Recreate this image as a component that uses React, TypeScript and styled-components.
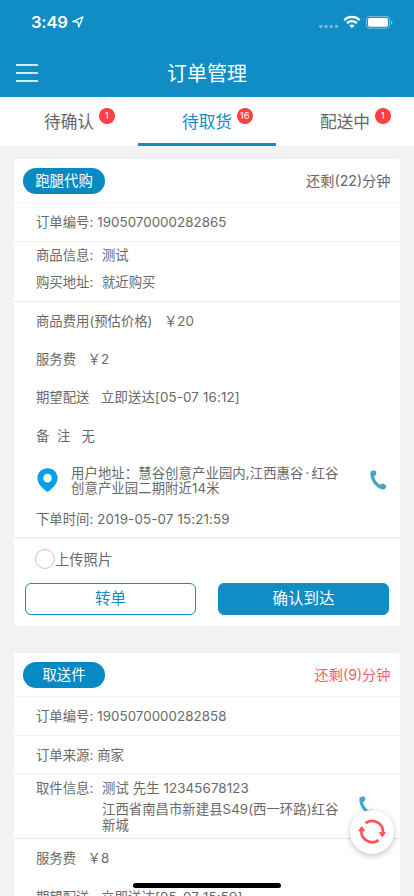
import React from 'react';
import styled, { createGlobalStyle } from 'styled-components';

const BLUE = '#0f8dc4';

const GlobalStyle = createGlobalStyle`
  * { box-sizing: border-box; }
  html, body { margin: 0; padding: 0; height: 896px; overflow: hidden; }
  body {
    background: #f2f2f2;
    color: #696969;
    font-family: Inter, "Noto Sans CJK SC", sans-serif;
    font-size: 13.35px;
  }
`;

const Screen = styled.div`
  position: relative;
  width: 414px;
  height: 896px;
  overflow: hidden;
  background: #f2f2f2;
`;

const Header = styled.header`
  height: 97px;
  background: ${BLUE};
  color: #fff;
`;

const StatusBar = styled.div`
  height: 48px;
  padding: 0 21px 4px 31px;
  display: flex;
  align-items: center;
`;

const Clock = styled.span`
  width: 40px;
  font-size: 16.6px;
  font-weight: 600;
  letter-spacing: -0.2px;
  white-space: nowrap;
`;

const StatusIcons = styled.div`
  margin-left: auto;
  display: flex;
  align-items: center;
`;

const TitleBar = styled.div`
  height: 49px;
  padding: 1px 16px 0;
  display: grid;
  grid-template-columns: 60px 1fr 60px;
  align-items: center;
`;

const MenuButton = styled.button`
  width: 22px;
  height: 18px;
  padding: 0;
  border: 0;
  background: none;
  display: flex;
  flex-direction: column;
  justify-content: space-between;
`;

const MenuLine = styled.span`
  width: 22px;
  height: 2px;
  background: #cfe8f3;
`;

const Title = styled.h1`
  margin: 0;
  padding-top: 2px;
  font-size: 20px;
  font-weight: 400;
  line-height: 46px;
  text-align: center;
`;

const Tabs = styled.nav`
  height: 49px;
  background: #fff;
  display: grid;
  grid-template-columns: repeat(3, 1fr);
`;

const Tab = styled.button<{ $active?: boolean }>`
  position: relative;
  height: 49px;
  padding: 4px 0 0;
  border: 0;
  border-bottom: 3px solid ${(p) => (p.$active ? BLUE : 'transparent')};
  background: none;
  color: ${(p) => (p.$active ? BLUE : '#666')};
  font-family: inherit;
  font-size: 16.7px;
  line-height: 42px;
  text-align: center;

  & + &::before {
    content: '';
    position: absolute;
    left: 0;
    top: 11px;
    width: 1px;
    height: 27px;
    background: #eee;
  }
`;

const Badge = styled.span`
  position: absolute;
  left: 98.700px;
  top: 11px;
  width: 16px;
  height: 16px;
  border-radius: 8px;
  background: #fb3f43;
  color: #fff;
  font-size: 9.5px;
  line-height: 16px;
  text-align: center;
`;

const OrderList = styled.main`
  padding: 13px 14px 0;
  display: flex;
  flex-direction: column;
  gap: 27px;
`;

const Card = styled.article`
  background: #fff;
  border-radius: 3px;
  flex: none;
`;

const CardHead = styled.div`
  height: 44px;
  padding: 1px 9.500px 0 9px;
  border-bottom: 1px solid #f5f5f5;
  display: flex;
  align-items: center;
  justify-content: space-between;
`;

const Pill = styled.span`
  width: 82px;
  height: 26px;
  border-radius: 13px;
  background: #0789c2;
  color: #fff;
  font-size: 14.4px;
  line-height: 26px;
  text-align: center;
`;

const Remaining = styled.span<{ $urgent?: boolean }>`
  color: ${(p) => (p.$urgent ? '#ff5b5d' : '#666')};
  font-size: 14.2px;
  line-height: 26px;
`;

const Row = styled.div<{ $h: number; $line?: string; $gap?: number; $bottom?: number }>`
  height: ${(p) => p.$h}px;
  padding: 0 0 ${(p) => p.$bottom ?? 0}px 22px;
  border-bottom: ${(p) => (p.$line ? `1px solid ${p.$line}` : '0')};
  display: flex;
  align-items: center;
  gap: ${(p) => p.$gap ?? 4}px;
  line-height: 20px;
  white-space: pre;
`;

const Label = styled.span<{ $w?: number }>`
  width: ${(p) => (p.$w ? `${p.$w}px` : 'auto')};
`;

const Value = styled.span<{ $spacing?: number }>`
  letter-spacing: ${(p) => p.$spacing ?? 0}px;
`;

const AddressBlock = styled.div`
  height: 50px;
  padding: 0 13px 0 23px;
  display: grid;
  grid-template-columns: 34px 1fr 17px;
  align-items: center;
`;

const AddressText = styled.p`
  margin: 0;
  line-height: 15.5px;
  letter-spacing: 0.05px;
  white-space: pre;
`;

const UserAddress = styled(AddressText)`
  padding-top: 2px;
  letter-spacing: 0.1px;
`;

const MiddleDot = styled.span`
  margin: 0 2px;
`;

const PickupBlock = styled.div`
  height: 65px;
  padding: 4px 24px 0 22px;
  border-bottom: 1px solid #e6e6e6;
  display: grid;
  grid-template-columns: 66px 1fr 17px;
  line-height: 20px;
  white-space: pre;
`;

const PickupPhone = styled.span`
  padding-top: 18px;
  line-height: 0;
`;

const PickupAddress = styled(AddressText)`
  margin-top: 4px;
`;

const Divider = styled.div`
  height: 2px;
  background: #f0f0f0;
`;

const Upload = styled.label`
  height: 39px;
  padding-left: 21px;
  display: flex;
  align-items: center;
  font-size: 14.3px;
`;

const Radio = styled.span`
  width: 20px;
  height: 20px;
  border: 1px solid #c4c4c4;
  border-radius: 50%;
`;

const Actions = styled.div`
  padding: 5px 11px 11px;
  display: flex;
  justify-content: space-between;
`;

const ActionButton = styled.button<{ $solid?: boolean }>`
  width: 171px;
  height: 32px;
  padding: 0;
  border: 1px solid ${BLUE};
  border-radius: 6px;
  background: ${(p) => (p.$solid ? BLUE : '#fff')};
  color: ${(p) => (p.$solid ? '#fff' : BLUE)};
  font-family: inherit;
  font-size: 15.5px;
  line-height: 30px;
`;

const RefreshButton = styled.button`
  position: absolute;
  left: 350px;
  top: 810px;
  width: 44px;
  height: 44px;
  padding: 0;
  border: 0;
  border-radius: 50%;
  background: #fff;
  box-shadow: 0 2px 6px rgba(0, 0, 0, 0.24);
  display: flex;
  align-items: center;
  justify-content: center;
`;

const HomeIndicator = styled.div`
  position: absolute;
  left: 133px;
  top: 882.5px;
  width: 148px;
  height: 5px;
  border-radius: 3px;
  background: #000;
`;

const LocationArrow = () => (
  <svg width="14" height="14" viewBox="0 0 14 14">
    <path d="M1.700 6.700 12 1.900 7.700 12 6.900 7.200Z" fill="none" stroke="#fff" strokeWidth="1.3" strokeLinejoin="round" />
  </svg>
);

const SignalWifiBattery = () => (
  <svg width="76" height="16" viewBox="317 14 76 16">
    <g fill="#fff" opacity="0.38">
      <circle cx="320.8" cy="26.5" r="1.8" />
      <circle cx="326" cy="26.5" r="1.8" />
      <circle cx="331.2" cy="26.5" r="1.8" />
      <circle cx="336.4" cy="26.5" r="1.8" />
    </g>
    <g fill="none" stroke="#fff" strokeWidth="2.2">
      <path d="M344.2 20.1a11 11 0 0 1 15.4 0" />
      <path d="M347 23.1a7 7 0 0 1 9.8 0" />
    </g>
    <path d="M349.3 25.6a3.8 3.8 0 0 1 5.2 0L351.9 28.2Z" fill="#fff" />
    <rect x="366.5" y="16.6" width="23" height="11.6" rx="3" fill="none" stroke="#fff" strokeOpacity="0.45" />
    <rect x="368" y="18.1" width="20" height="8.6" rx="1.6" fill="#fff" />
    <path d="M391 20.4q1.4.5 1.4 2t-1.4 2z" fill="#fff" opacity="0.5" />
  </svg>
);

const PinIcon = () => (
  <svg width="21" height="24" viewBox="0 0 21 24">
    <path
      d="M10.5.2C4.8.2.4 4.5.4 10c0 5.6 4.7 9.7 8.9 13.3q1.2 1 2.4 0C15.9 19.7 20.6 15.6 20.6 10 20.6 4.5 16.2.2 10.5.2Zm0 5.6a4.3 4.3 0 1 1 0 8.6 4.3 4.3 0 0 1 0-8.6Z"
      fill="#02a1ec"
      fillRule="evenodd"
    />
  </svg>
);

const PhoneIcon = () => (
  <svg width="17" height="20" viewBox="0 0 17 20">
    <path
      d="M.6 1.7C1.800.2 4.200.1 5.500.8c.9.600 1 3.500.3 4.300-.5.600-1.400.6-1.700 1.300.3 2.900 3.200 6.700 6.200 8.200.9.200 1.100-.9 1.900-1.100 1.200-.2 3.800 1.500 4.100 2.500.2 1.300-1.500 3.300-3.100 3.600C6.400 19.100-.8 10 .6 1.700Z"
      fill="#4ba3ca"
    />
  </svg>
);

const RefreshIcon = () => (
  <svg width="28" height="26" viewBox="0 0 28 26">
    <g fill="none" stroke="#ff5356" strokeWidth="2.7">
      <path d="M7.6 4.2A10.8 10.8 0 0 1 24.7 15" />
      <path d="M20.6 21.1A10.8 10.8 0 0 1 3.5 11" />
    </g>
    <path d="M20.6 13.2H28L24.4 18.5ZM0 12.3 3.6 7 7.4 12.3Z" fill="#ff5356" />
  </svg>
);

export default function App() {
  return (
    <Screen>
      <GlobalStyle />
      <Header>
        <StatusBar>
          <Clock>3:49</Clock>
          <LocationArrow />
          <StatusIcons>
            <SignalWifiBattery />
          </StatusIcons>
        </StatusBar>
        <TitleBar>
          <MenuButton aria-label="菜单">
            <MenuLine />
            <MenuLine />
            <MenuLine />
          </MenuButton>
          <Title>订单管理</Title>
        </TitleBar>
      </Header>

      <Tabs>
        <Tab>待确认<Badge>1</Badge></Tab>
        <Tab $active>待取货<Badge>16</Badge></Tab>
        <Tab>配送中<Badge>1</Badge></Tab>
      </Tabs>

      <OrderList>
        <Card>
          <CardHead>
            <Pill>跑腿代购</Pill>
            <Remaining>还剩(22)分钟</Remaining>
          </CardHead>
          <Row $h={39} $line="#f0f0f0"><Label>订单编号:</Label><Value $spacing={0.04}>1905070000282865</Value></Row>
          <Row $h={26} $gap={0}><Label $w={66}>商品信息:</Label><Value>测试</Value></Row>
          <Row $h={34} $gap={0} $bottom={6} $line="#e6e6e6"><Label $w={66}>购买地址:</Label><Value>就近购买</Value></Row>
          <Row $h={37} $gap={11.5}><Label>商品费用(预估价格)</Label><Value>￥20</Value></Row>
          <Row $h={39} $gap={11.5}><Label>服务费</Label><Value>￥2</Value></Row>
          <Row $h={38} $gap={0}><Label $w={65}>期望配送</Label><Value $spacing={0.14}>立即送达[05-07 16:12]</Value></Row>
          <Row $h={39} $gap={0}><Label $w={21}>备</Label><Label $w={24.5}>注</Label><Value>无</Value></Row>
          <AddressBlock>
            <PinIcon />
            <UserAddress>
              用户地址：慧谷创意产业园内,江西惠谷<MiddleDot>·</MiddleDot>红谷{'\n'}
              创意产业园二期附近14米
            </UserAddress>
            <PhoneIcon />
          </AddressBlock>
          <Row $h={32} $bottom={4}><Label>下单时间:</Label><Value $spacing={0.15}>2019-05-07 15:21:59</Value></Row>
          <Divider />
          <Upload><Radio />上传照片</Upload>
          <Actions>
            <ActionButton>转单</ActionButton>
            <ActionButton $solid>确认到达</ActionButton>
          </Actions>
        </Card>

        <Card>
          <CardHead>
            <Pill>取送件</Pill>
            <Remaining $urgent>还剩(9)分钟</Remaining>
          </CardHead>
          <Row $h={39} $line="#f2f2f2"><Label>订单编号:</Label><Value $spacing={0.04}>1905070000282858</Value></Row>
          <Row $h={38} $line="#f2f2f2"><Label>订单来源:</Label><Value>商家</Value></Row>
          <PickupBlock>
            <Label>取件信息:</Label>
            <div>
              <Value $spacing={0.1}>测试 先生 12345678123</Value>
              <PickupAddress>{'江西省南昌市新建县S49(西一环路)红谷\n新城'}</PickupAddress>
            </div>
            <PickupPhone><PhoneIcon /></PickupPhone>
          </PickupBlock>
          <Row $h={38} $gap={11.5}><Label>服务费</Label><Value>￥8</Value></Row>
          <Row $h={39} $gap={0}><Label $w={65}>期望配送</Label><Value $spacing={0.14}>立即送达[05-07 15:59]</Value></Row>
        </Card>
      </OrderList>

      <RefreshButton aria-label="刷新"><RefreshIcon /></RefreshButton>
      <HomeIndicator />
    </Screen>
  );
}
